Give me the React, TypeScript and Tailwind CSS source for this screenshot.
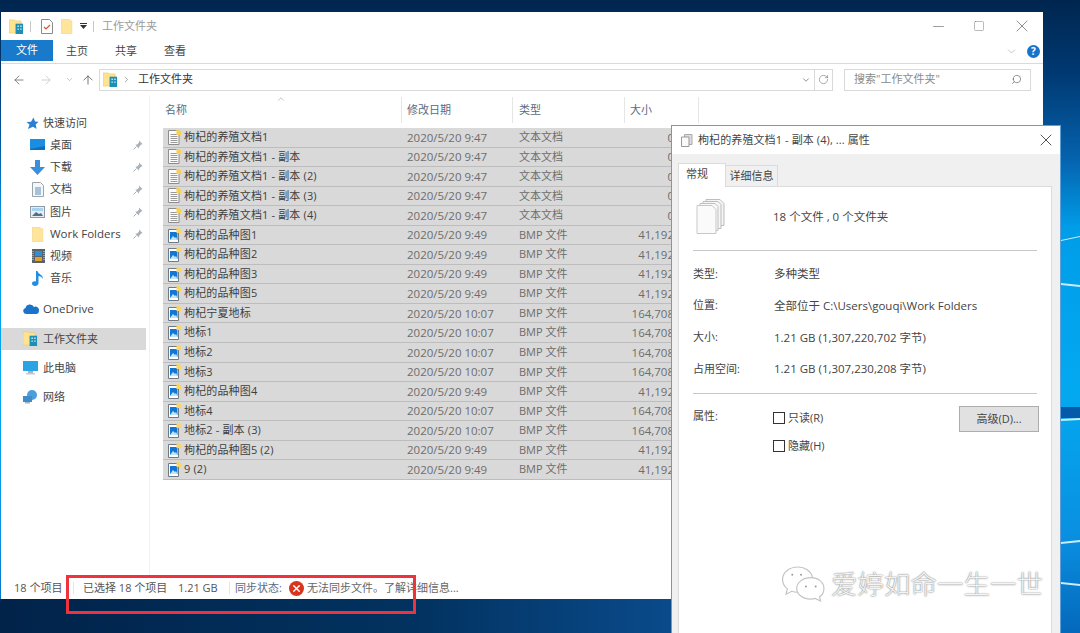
import React from 'react';
import { ChevronDown, ChevronUp, ArrowLeft, ArrowRight, ArrowUp, RotateCw, Search, X, Minus, Square, ChevronRight } from 'lucide-react';

const font = '[font-family:"Open_Sans","Noto_Sans_CJK_SC",sans-serif]';

type Row = { name: string; date: string; type: string; size: string; txt?: boolean };

const bmp = (name: string, date = '2020/5/20 9:49', size = '41,192'): Row => ({ name, date, type: 'BMP 文件', size });
const txt = (name: string): Row => ({ name, date: '2020/5/20 9:47', type: '文本文档', size: '0', txt: true });

const rows: Row[] = [
  txt('枸杞的养殖文档1'),
  txt('枸杞的养殖文档1 - 副本'),
  txt('枸杞的养殖文档1 - 副本 (2)'),
  txt('枸杞的养殖文档1 - 副本 (3)'),
  txt('枸杞的养殖文档1 - 副本 (4)'),
  bmp('枸杞的品种图1'),
  bmp('枸杞的品种图2'),
  bmp('枸杞的品种图3'),
  bmp('枸杞的品种图5'),
  bmp('枸杞宁夏地标', '2020/5/20 10:07', '164,708'),
  bmp('地标1', '2020/5/20 10:07', '164,708'),
  bmp('地标2', '2020/5/20 10:07', '164,708'),
  bmp('地标3', '2020/5/20 10:07', '164,708'),
  bmp('枸杞的品种图4'),
  bmp('地标4', '2020/5/20 10:07', '164,708'),
  bmp('地标2 - 副本 (3)', '2020/5/20 10:07', '164,708'),
  bmp('枸杞的品种图5 (2)'),
  bmp('9 (2)'),
];

function FolderBuilding({ size = 16 }: { size?: number }) {
  return (
    <svg width={size} height={size} viewBox="0 0 16 16" className="shrink-0">
      <path d="M0 1h6l1 1h6v13H0z" fill="#ffe38f" stroke="#e8c766" strokeWidth="0.6" />
      <rect x="7" y="5" width="8" height="11" fill="#1b8fb5" />
      <path d="M9 7h1.500v1.500H9zM12 7h1.500v1.500H12zM9 10h1.500v1.500H9zM12 10h1.500v1.500H12z" fill="#cfeefa" />
    </svg>
  );
}

function FolderPlain({ w = 13, h = 17 }: { w?: number; h?: number }) {
  return (
    <svg width={w} height={h} viewBox="0 0 13 17" className="shrink-0">
      <path d="M0 0h9v2h3v15H0z" fill="#ffe59a" stroke="#efd27a" strokeWidth="0.6" />
    </svg>
  );
}

function TextFileIcon() {
  return (
    <svg width="14" height="15" viewBox="0 0 14 15" className="shrink-0">
      <path d="M.5.500h8l2.500 2.500v11.500H.500z" fill="#fbfbfb" stroke="#8c8c8c" />
      <path d="M2.500 4.500h7M2.500 6.500h7M2.500 8.500h7M2.500 10.500h7M2.500 12.500h7" stroke="#9a9a9a" />
      <path d="M8.500 0h3v1.200h1.500V5H8.500z" fill="#f9cf4e" />
    </svg>
  );
}

function BmpFileIcon() {
  return (
    <svg width="14" height="15" viewBox="0 0 14 15" className="shrink-0">
      <path d="M.5 1.500h10v13H.500z" fill="#fff" stroke="#6f7a85" />
      <rect x="2" y="4" width="7.500" height="8" fill="#1277d4" />
      <path d="M2 12l3-4 2 2 1-1 1.500 3z" fill="#bfe3fb" />
      <path d="M8.500 0h3v1.200h1.500V5H8.500z" fill="#f9d565" />
    </svg>
  );
}

function Pin() {
  return (
    <svg width="10" height="10" viewBox="0 0 10 10" className="shrink-0">
      <path d="M6 .5l3.500 3.500-1.200.600-2 2-.4 1.800L2.300 4.800l1.800-.4 2-2z" fill="#a9b0b7" />
      <path d="M3.500 6.500L.5 9.500" stroke="#a9b0b7" />
    </svg>
  );
}

function NavItem({ icon, label, pin, selected, indent }: { icon: React.ReactNode; label: string; pin?: boolean; selected?: boolean; indent?: boolean }) {
  return (
    <div className={`flex h-[22.2px] items-center ${selected ? 'bg-[#d9d9d9]' : ''} ${indent ? 'pl-[29px]' : 'pl-[22px]'} pr-[3px]`}>
      <span className="flex w-[20px] shrink-0 items-center">{icon}</span>
      <span className={`flex-1 text-[#444] whitespace-nowrap ${label === 'Work Folders' || label === 'OneDrive' ? 'text-[11.5px]' : 'text-[11px]'}`}>{label}</span>
      {pin && <Pin />}
    </div>
  );
}

function Sidebar() {
  return (
    <div className="w-[149px] shrink-0 border-r border-[#f2f2f2] pt-[17px] pr-[3px]">
      <NavItem
        label="快速访问"
        icon={<svg width="13" height="13" viewBox="0 0 13 13" className="ml-[3px]"><path d="M7.500.5l1.500 4 3.500.3-2.800 2.600.9 4.600-3.600-2.200L2 12l1.500-4.500L.5 5l4.500-.3z" fill="#2a80d2" /></svg>}
      />
      <NavItem indent pin label="桌面" icon={<svg width="15" height="12" viewBox="0 0 15 12"><rect width="15" height="11" fill="#1a8ee0" /><path d="M0 10l15-3v4H0z" fill="#0d6fbd" /></svg>} />
      <NavItem indent pin label="下载" icon={<svg width="15" height="15" viewBox="0 0 15 15"><path d="M5 0h5v7h5l-7.500 8L0 7h5z" fill="#3a8fdc" /></svg>} />
      <NavItem indent pin label="文档" icon={<svg width="12" height="15" viewBox="0 0 12 15" className="ml-[2px]"><path d="M.5.500h8l3 3v11H.500z" fill="#f4f6f8" stroke="#9aa4ad" /><path d="M3 6h6M3 8h6M3 10h6M3 12h6" stroke="#5b8db8" /></svg>} />
      <NavItem indent pin label="图片" icon={<svg width="15" height="12" viewBox="0 0 15 12"><rect x=".5" y=".5" width="14" height="11" fill="#e8eef3" stroke="#8e9aa5" /><path d="M2 10l4-4 3 2 2-1 2 3z" fill="#4e7186" /><rect x="2" y="2" width="11" height="3" fill="#a7d3ee" /></svg>} />
      <NavItem indent pin label="Work Folders" icon={<span className="ml-[2px] flex"><FolderPlain w={12} h={15} /></span>} />
      <NavItem indent label="视频" icon={<svg width="13" height="14" viewBox="0 0 13 14" className="ml-[2px]"><rect width="13" height="14" fill="#59636b" /><rect x="3" y="2" width="7" height="5" fill="#2d8fd8" /><rect x="3" y="8" width="7" height="4" fill="#e0a030" /><path d="M1 2v10M12 2v10" stroke="#ddd" strokeDasharray="1 1" /></svg>} />
      <NavItem indent label="音乐" icon={<svg width="12" height="16" viewBox="0 0 12 16" className="ml-[2px]"><path d="M4 1h1.500c.5 3 5.500 3.500 5.500 8-1-2-3-3-4.500-3v7c0 1.800-1.700 3-3.500 3S0 15 0 13.500 1.800 11 4 11.500z" fill="#1f8fe6" /></svg>} />
      <div className="h-[8px]" />
      <NavItem label="OneDrive" icon={<svg width="16" height="10" viewBox="0 0 16 10"><path d="M3 10a3 3 0 0 1-.5-5.900A4.500 4.500 0 0 1 11 3a3.500 3.500 0 0 1 4.900 4A3 3 0 0 1 13 10z" fill="#1b74c9" /></svg>} />
      <div className="h-[8px]" />
      <NavItem selected label="工作文件夹" icon={<FolderBuilding size={15} />} />
      <div className="h-[7px]" />
      <NavItem label="此电脑" icon={<svg width="15" height="14" viewBox="0 0 15 14"><rect width="15" height="10" fill="#2ba4e6" /><rect x="5" y="10" width="5" height="2" fill="#a8b3bd" /><rect x="3" y="12" width="9" height="1.500" fill="#c3ccd4" /></svg>} />
      <div className="h-[7px]" />
      <NavItem label="网络" icon={<svg width="15" height="14" viewBox="0 0 15 14"><circle cx="9" cy="5" r="5" fill="#4d9fdc" /><rect x="0" y="6" width="9" height="6" fill="#3f8cc8" /><rect x="2" y="12" width="5" height="1.500" fill="#aab4bd" /></svg>} />
    </div>
  );
}

function FileRow({ row }: { row: Row }) {
  return (
    <div className="flex h-[19.55px] items-center border-b border-[#bdbdbd] bg-[#d9d9d9] text-[11.5px] text-[#6d6d6d]">
      <div className="flex w-[241px] shrink-0 items-center gap-[2px] pl-[5px] text-[11px] tracking-[0.15px] text-[#3f3f3f]">
        {row.txt ? <TextFileIcon /> : <BmpFileIcon />}
        <span className="whitespace-nowrap">{row.name}</span>
      </div>
      <div className="w-[112px] shrink-0 pl-[3px] whitespace-nowrap">{row.date}</div>
      <div className="w-[112px] shrink-0 pl-[3px] text-[11px] whitespace-nowrap">{row.type}</div>
      <div className="w-[46px] shrink-0 text-right whitespace-nowrap">{row.size}</div>
    </div>
  );
}

function HeaderCell({ label, className }: { label: string; className: string }) {
  return (
    <div className={`flex h-full shrink-0 items-center border-r border-[#e5e5e5] text-[11px] text-[#5a6b7f] ${className}`}>{label}</div>
  );
}

function Explorer() {
  return (
    <div className="absolute left-[1px] top-[12px] flex h-[587px] w-[1042px] flex-col bg-white">
      {/* title bar */}
      <div className="flex h-[28px] shrink-0 items-center pl-[8px]">
        <FolderBuilding size={15} />
        <span className="mx-[6px] h-[11px] w-px bg-[#c8c8c8]" />
        <svg width="12" height="15" viewBox="0 0 12 15" className="ml-[4px]"><path d="M.5.500h8l3 3v11H.500z" fill="#fff" stroke="#8a8a8a" /><path d="M3 8l2 2 4-4" stroke="#d9532c" strokeWidth="1.200" fill="none" /></svg>
        <span className="ml-[8px]"><FolderPlain w={12} h={15} /></span>
        <svg width="7" height="6" viewBox="0 0 7 6" className="ml-[7px]"><path d="M0 0h7v1H0zM0 2h7L3.500 6z" fill="#333" /></svg>
        <span className="mr-[8px] ml-[6px] h-[11px] w-px bg-[#c8c8c8]" />
        <span className="text-[11px] text-[#999]">工作文件夹</span>
        <div className="ml-auto flex items-center pr-[11px] text-[#777]">
          <Minus size={17} strokeWidth={1} className="mr-[26px]" />
          <Square size={12} strokeWidth={1} className="mr-[27px]" />
          <X size={20} strokeWidth={1} />
        </div>
      </div>
      {/* ribbon tabs */}
      <div className="flex h-[24px] shrink-0 items-start border-b border-[#dadada] text-[11px] text-[#444]">
        <div className="flex h-[21px] w-[52px] items-center justify-center bg-[#1979ca] text-white">文件</div>
        <div className="ml-[13px] flex h-[22px] w-[36px] items-center">主页</div>
        <div className="ml-[13px] flex h-[22px] w-[36px] items-center">共享</div>
        <div className="ml-[13px] flex h-[22px] w-[36px] items-center">查看</div>
        <div className="ml-auto flex h-[22px] items-center pr-[3px]">
          <ChevronDown size={13} strokeWidth={1} className="mr-[9px] text-[#999]" />
          <span className="flex h-[13px] w-[13px] items-center justify-center rounded-full bg-[#1a73c9] text-[10px] font-bold text-white">?</span>
        </div>
      </div>
      {/* address bar */}
      <div className="flex h-[31px] shrink-0 items-center text-[11px]">
        <ArrowLeft size={14} strokeWidth={1.500} className="ml-[11px] text-[#777]" />
        <ArrowRight size={14} strokeWidth={1.500} className="ml-[13px] text-[#ccc]" />
        <ChevronDown size={9} strokeWidth={1.500} className="ml-[12px] text-[#999]" />
        <ArrowUp size={14} strokeWidth={1.500} className="ml-[7px] text-[#666]" />
        <div className="ml-[4px] flex h-[22px] w-[734px] items-center border border-[#d9d9d9]">
          <span className="ml-[3px]"><FolderBuilding size={15} /></span>
          <ChevronRight size={9} strokeWidth={1.500} className="ml-[4px] text-[#666]" />
          <span className="ml-[7px] text-[#333]">工作文件夹</span>
          <ChevronDown size={10} strokeWidth={1.500} className="ml-auto mr-[3px] text-[#555]" />
          <div className="flex h-full w-[18px] items-center justify-center border-l border-[#d9d9d9]"><RotateCw size={11} strokeWidth={1.200} className="text-[#666]" /></div>
        </div>
        <div className="ml-[11px] flex h-[22px] w-[187px] items-center justify-between border border-[#d9d9d9] pl-[9px] pr-[8px] text-[#8a8a8a]">
          <span>搜索"工作文件夹"</span>
          <Search size={11} strokeWidth={1.500} className="-scale-x-100 text-[#666]" />
        </div>
      </div>
      {/* body */}
      <div className="flex min-h-0 flex-1">
        <Sidebar />
        <div className="relative min-w-0 flex-1 pt-[2px]">
          <ChevronUp size={10} strokeWidth={1.200} className="absolute left-[126px] top-[-1px] text-[#888]" />
          <div className="flex h-[26px] items-center pl-[12px]">
            <HeaderCell label="名称" className="w-[240px] pl-[3px]" />
            <HeaderCell label="修改日期" className="w-[111px] pl-[5px]" />
            <HeaderCell label="类型" className="w-[112px] pl-[6px]" />
            <HeaderCell label="大小" className="w-[74px] pl-[5px]" />
          </div>
          <div className="mt-[5px] ml-[13px] w-[600px] overflow-hidden">
            {rows.map((r) => (
              <FileRow key={r.name} row={r} />
            ))}
          </div>
        </div>
      </div>
      {/* status bar */}
      <div className="flex h-[22px] shrink-0 items-center whitespace-nowrap text-[11px] text-[#555]">
        <span className="ml-[13px] w-[59px]">18 个项目</span>
        <span className="h-[12px] w-px bg-[#e5e5e5]" />
        <span className="ml-[9px] w-[95px]">已选择 18 个项目</span>
        <span className="w-[51px]">1.21 GB</span>
        <span className="h-[12px] w-px bg-[#e5e5e5]" />
        <span className="ml-[5px] w-[54px] text-[#5a6b7f]">同步状态:</span>
        <span className="flex h-[15px] w-[15px] items-center justify-center rounded-full bg-[#d9341c]"><X size={11} strokeWidth={3} className="text-white" /></span>
        <span className="ml-[3px] text-[#666]">无法同步文件。了解详细信息...</span>
      </div>
    </div>
  );
}

function PropLine({ label, value }: { label: string; value: string }) {
  return (
    <div className="flex h-[31.700px] items-center text-[11.5px] text-[#444]">
      <span className="w-[81px] shrink-0 text-[11px]">{label}</span>
      <span>{value}</span>
    </div>
  );
}

function Props() {
  return (
    <div className="absolute left-[671px] top-[125px] flex h-[520px] w-[390px] flex-col border border-[#5d9fd6] bg-[#f0f0f0]">
      <div className="flex h-[28px] shrink-0 items-center bg-white pl-[9px] text-[11px] text-[#444]">
        <svg width="12" height="13" viewBox="0 0 12 13"><path d="M3.500.5H11v10H3.500z" fill="#ddd" stroke="#aaa" /><path d="M.5 3H8v9.500H.500z" fill="#fafafa" stroke="#999" /></svg>
        <span className="ml-[5px] tracking-[0.1px]">枸杞的养殖文档1 - 副本 (4), ... 属性</span>
        <X size={20} strokeWidth={1} className="ml-auto mr-[4px] text-[#333]" />
      </div>
      <div className="flex h-[32px] shrink-0 items-end pl-[6px] text-[11px] text-[#444]">
        <div className="z-10 -mb-px flex h-[24px] w-[48px] items-center border border-b-0 border-[#dcdcdc] bg-white pb-[3px] pl-[7px]">常规</div>
        <div className="flex h-[21px] w-[52px] items-center justify-center border border-b-0 border-l-0 border-[#dcdcdc] bg-[#f0f0f0]">详细信息</div>
      </div>
      <div className="mr-[8px] ml-[6px] flex-1 border border-[#dcdcdc] bg-white px-[14px]">
        <div className="flex h-[64px] items-center border-b border-[#c8c8c8] pb-[4px]">
          <svg width="30" height="36" viewBox="0 0 30 36" className="ml-[3px]">
            <path d="M10 .5h14l4 4v22H10z" fill="#f4f4f4" stroke="#bdbdbd" />
            <path d="M7 2.500h15l3 3v24H7z" fill="#f6f6f6" stroke="#bdbdbd" />
            <path d="M4 4.500h15l3 3v24H4z" fill="#f8f8f8" stroke="#c0c0c0" />
            <path d="M1 6.500h15l4 4v24H1z" fill="#fafafa" stroke="#c8c8c8" />
          </svg>
          <span className="ml-[47px] text-[11.5px] text-[#444]">18 个文件 , 0 个文件夹</span>
        </div>
        <div className="border-b border-[#c8c8c8] pt-[7px] pb-[8px]">
          <PropLine label="类型:" value="多种类型" />
          <PropLine label="位置:" value="全部位于 C:\Users\gouqi\Work Folders" />
          <PropLine label="大小:" value="1.21 GB (1,307,220,702 字节)" />
          <PropLine label="占用空间:" value="1.21 GB (1,307,230,208 字节)" />
        </div>
        <div className="relative flex pt-[14px] text-[11px] text-[#444]">
          <span className="w-[80px] shrink-0">属性:</span>
          <div className="flex flex-col gap-[13px] pt-[3px]">
            <label className="flex h-[15px] items-center gap-[3px]"><span className="h-[12px] w-[12px] border border-[#333] bg-white" />只读(R)</label>
            <label className="flex h-[15px] items-center gap-[3px]"><span className="h-[12px] w-[12px] border border-[#333] bg-white" />隐藏(H)</label>
          </div>
          <div className="absolute right-[-2px] top-[12px] flex h-[26px] w-[80px] items-center justify-center border border-[#adadad] bg-[#e1e1e1]">高级(D)...</div>
        </div>
      </div>
    </div>
  );
}

function Watermark() {
  return (
    <div className="absolute left-[781px] top-[566px] flex items-center gap-[6px]">
      <svg width="44" height="37" viewBox="0 0 44 38" fill="none" stroke="#c4c4c4" strokeWidth="1.200">
        <path d="M17 1C8 1 1 6.500 1 14c0 4 2 7 5 9.500L4.500 29l6-3c2 .7 4 1 5.500 1" fill="#fff" />
        <path d="M17 1c7 0 13 4 15 11" />
        <path d="M30 12C22 12 15.500 17 15.500 23S22 34 30 34c1.500 0 3-.2 4.500-.7L40 36l-1-4.500c3-2 4.500-5 4.500-8.500C43.500 17 38 12 30 12z" fill="#fff" />
        <circle cx="25" cy="21" r="1" fill="#999" stroke="none" /><circle cx="35" cy="21" r="1" fill="#999" stroke="none" />
        <circle cx="11" cy="9" r="1" fill="#999" stroke="none" /><circle cx="20" cy="9" r="1" fill="#999" stroke="none" />
      </svg>
      <span className="text-[26.5px] leading-none font-light whitespace-nowrap text-[#f4f4f4] [text-shadow:0_0_1.500px_#444]">爱婷如命一生一世</span>
    </div>
  );
}

function Wallpaper() {
  return (
    <svg width="1080" height="633" viewBox="0 0 1080 633" className="absolute inset-0">
      <defs>
        <linearGradient id="wall" x1="0" y1="0" x2="0" y2="1">
          <stop offset="0" stopColor="#00264f" />
          <stop offset="0.12" stopColor="#003a74" />
          <stop offset="0.25" stopColor="#0562ad" />
          <stop offset="0.36" stopColor="#009de8" />
          <stop offset="0.62" stopColor="#03a9f0" />
          <stop offset="0.85" stopColor="#0a8fe0" />
          <stop offset="1" stopColor="#0468bb" />
        </linearGradient>
        <linearGradient id="floor" x1="0" y1="0" x2="1" y2="0">
          <stop offset="0" stopColor="#01234a" />
          <stop offset="0.6" stopColor="#02325f" />
          <stop offset="1" stopColor="#0a4b8c" />
        </linearGradient>
      </defs>
      <rect width="1080" height="633" fill="url(#wall)" />
      <rect y="599" width="680" height="34" fill="url(#floor)" />
      <rect x="1060" y="407" width="20" height="11" fill="#045aa8" />
      <path d="M1061 283l19 2v2l-19-2zM1061 419l19-1v2l-19 1zM1061 542l19-2v2l-19 2zM1061 582l19 2v2l-19-2zM1061 240l19-4v1l-19 4z" fill="#c8ecfb" />
    </svg>
  );
}

export default function App() {
  return (
    <div className={`relative h-[633px] w-[1080px] overflow-hidden ${font}`}>
      <Wallpaper />
      <Explorer />
      <Props />
      <Watermark />
      {/* red annotation box */}
      <div className="absolute left-[66px] top-[575px] h-[39px] w-[350px] border-[3px] border-[#f0323c]" />
    </div>
  );
}
